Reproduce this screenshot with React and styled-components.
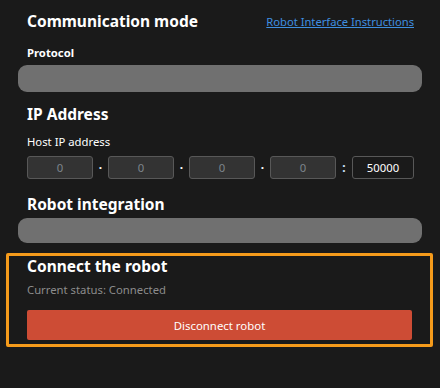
import React from 'react'
import styled, { createGlobalStyle } from 'styled-components'

const GlobalStyle = createGlobalStyle`
  html, body {
    margin: 0;
    padding: 0;
    background: #1a1a1a;
  }
  body {
    font-family: "Noto Sans", "Open Sans", sans-serif;
    color: #ffffff;
  }
`;

const Page = styled.div`
  width: 440px;
  height: 388px;
  box-sizing: border-box;
  padding: 10px 0 0;
  display: flex;
  flex-direction: column;
`;

const Section = styled.section`
  padding: 0 18px;
  display: flex;
  flex-direction: column;
`;

const HeaderRow = styled.div`
  display: flex;
  align-items: center;
  justify-content: space-between;
  padding: 0 8px 0 9px;
`;

const Title = styled.h2`
  margin: ${({ $top }) => $top || 0}px 0 0;
  padding-left: ${({ $inset }) => ($inset ? '9px' : '0')};
  font-size: 15.5px;
  line-height: ${({ $lh }) => $lh || 22}px;
  font-weight: 700;
  color: #ffffff;
`;

const Link = styled.a`
  font-size: 11.2px;
  color: #3f8fe0;
  text-decoration: underline;
  cursor: pointer;
`;

const Label = styled.div`
  padding-left: ${({ $flush }) => ($flush ? 0 : 9)}px;
  margin-top: ${({ $top }) => $top || 0}px;
  font-size: 11.3px;
  line-height: 16px;
  font-weight: ${({ $bold }) => ($bold ? 700 : 400)};
  color: ${({ $muted }) => ($muted ? '#8c8c8c' : '#ffffff')};
`;

const Bar = styled.div`
  margin-top: ${({ $top }) => $top || 0}px;
  height: ${({ $h }) => $h || 26}px;
  border-radius: 9px;
  background: #707070;
`;

const IpRow = styled.div`
  margin-top: 6px;
  padding-left: 9px;
  display: flex;
  align-items: center;
`;

const Octet = styled.div`
  width: 66px;
  height: 23px;
  box-sizing: border-box;
  border: 1px solid #585858;
  border-radius: 3px;
  background: #333333;
  color: #7d858c;
  font-size: 11.3px;
  display: flex;
  align-items: center;
  justify-content: center;
`;

const Port = styled(Octet)`
  width: 62px;
  background: #1a1a1a;
  color: #ffffff;
`;

const Sep = styled.span`
  width: ${({ $w }) => $w}px;
  text-align: center;
  font-size: 12px;
  font-weight: 700;
  color: ${({ $blue }) => ($blue ? '#cfe4ff' : '#ffffff')};
`;

const Frame = styled.div`
  flex-shrink: 0;
  margin: 10px 7px 0 6px;
  height: 94px;
  box-sizing: border-box;
  border: 3px solid #f59b1b;
  border-radius: 2px;
  padding: 0 18px;
  display: flex;
  flex-direction: column;
`;

const Button = styled.button`
  margin-top: 12px;
  height: 30px;
  border: none;
  border-radius: 2px;
  background: #cd4c35;
  color: #ffffff;
  font-family: inherit;
  font-size: 11.4px;
  cursor: pointer;
`;

export default function App() {
  return (
    <>
      <GlobalStyle />
      <Page>
        <Section>
          <HeaderRow>
            <Title>Communication mode</Title>
            <Link>Robot Interface Instructions</Link>
          </HeaderRow>
          <Label $bold $top={13}>Protocol</Label>
          <Bar $top={4} $h={27} />
        </Section>

        <Section>
          <Title $inset $top={11}>IP Address</Title>
          <Label $top={9}>Host IP address</Label>
          <IpRow>
            <Octet>0</Octet>
            <Sep $w={15}>·</Sep>
            <Octet>0</Octet>
            <Sep $w={15}>·</Sep>
            <Octet>0</Octet>
            <Sep $w={15}>·</Sep>
            <Octet>0</Octet>
            <Sep $w={16} $blue>:</Sep>
            <Port>50000</Port>
          </IpRow>
          <Title $inset $top={14}>Robot integration</Title>
          <Bar $top={3} $h={25} />
        </Section>

        <Frame>
          <Title $lh={19} $top={1}>Connect the robot</Title>
          <Label $muted $flush $top={6}>Current status: Connected</Label>
          <Button>Disconnect robot</Button>
        </Frame>
      </Page>
    </>
  )
}
